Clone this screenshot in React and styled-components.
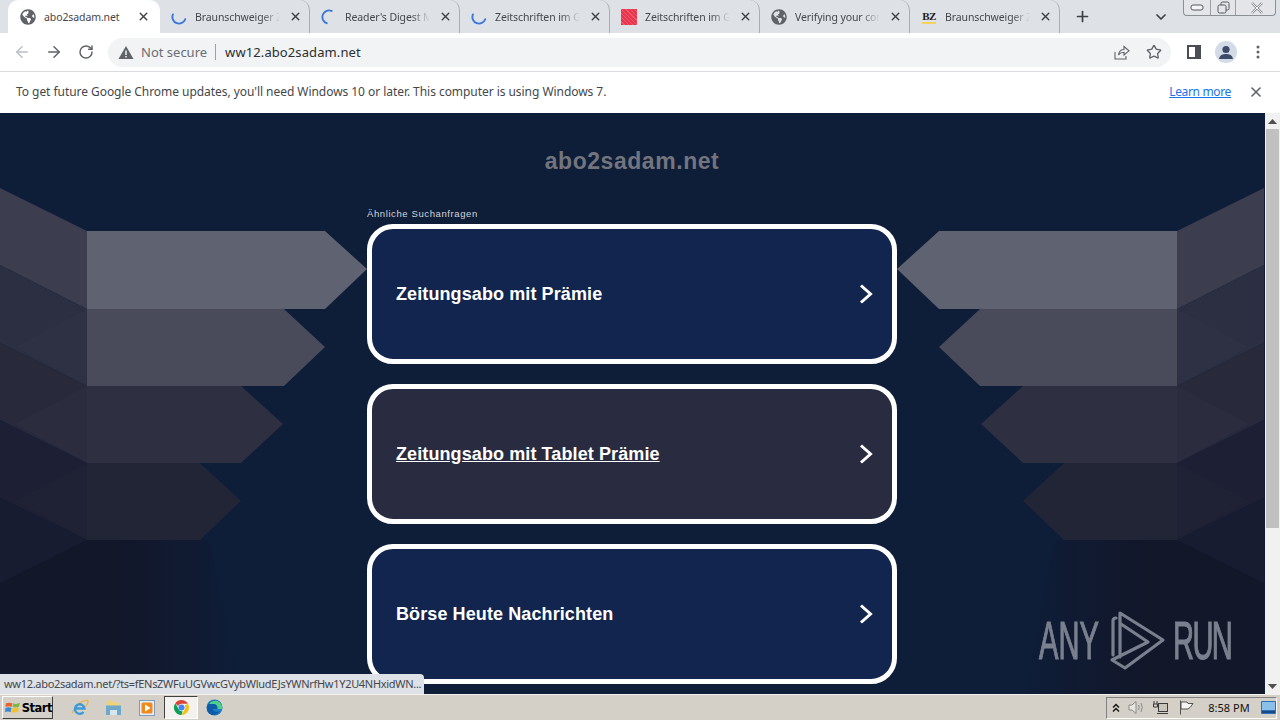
import React from "react";
import styled, { createGlobalStyle } from "styled-components";
import { ArrowLeft, ArrowRight, RotateCw, X, Plus, ChevronDown, Star } from "lucide-react";
import { FaGlobeAmericas } from "react-icons/fa";

const UI_FONT = `"Noto Sans", "Liberation Sans", sans-serif`;

const GlobalStyle = createGlobalStyle`
  html, body {
    margin: 0;
    padding: 0;
    overflow: hidden;
  }
  body {
    font-family: ${UI_FONT};
  }
`;

const Screen = styled.div`
  position: relative;
  width: 1280px;
  height: 720px;
  display: flex;
  flex-direction: column;
  overflow: hidden;
  background: #fff;
`;

/* tab strip */
const TabStrip = styled.div`
  height: 33px;
  flex: none;
  display: flex;
  align-items: stretch;
  padding-left: 8px;
  background: #dee1e6;
`;

const Tab = styled.div`
  position: relative;
  box-sizing: border-box;
  width: ${(p) => (p.$active ? "152px" : "150px")};
  flex: none;
  display: flex;
  align-items: center;
  padding-left: ${(p) => (p.$active ? "12px" : "11px")};
  padding-right: ${(p) => (p.$active ? "10px" : "7px")};
  gap: 8px;
  background: ${(p) => (p.$active ? "#fff" : "transparent")};
  border-radius: 10px 10px 0 0;
  border-right: ${(p) => (p.$sep ? "1px solid #a9acb1" : "0")};
  background-clip: padding-box;
`;

const TabIcon = styled.span`
  width: 16px;
  height: 16px;
  flex: none;
  display: flex;
  align-items: center;
  justify-content: center;
  color: #5f6368;
`;

const TabTitle = styled.span`
  flex: 1;
  min-width: 0;
  font-size: 10.5px;
  letter-spacing: -0.1px;
  line-height: 16px;
  white-space: nowrap;
  overflow: hidden;
  color: #44474b;
  ${(p) =>
    p.$fade
      ? "mask-image: linear-gradient(to right, #000 78%, transparent 100%);"
      : ""}
`;

const TabClose = styled.span`
  width: 14px;
  height: 14px;
  flex: none;
  display: flex;
  align-items: center;
  justify-content: center;
  color: #3c4043;
`;

const RedFavicon = styled.span`
  width: 16px;
  height: 16px;
  background: repeating-linear-gradient(45deg, #e8374d 0 2px, #f0596b 2px 3px);
`;

const BzFavicon = styled.span`
  font-family: "Liberation Serif", serif;
  font-weight: 700;
  font-size: 11px;
  letter-spacing: -0.6px;
  line-height: 12px;
  color: #1d1d1d;
  border-bottom: 2px solid #f3d35c;
`;

const StripButton = styled.span`
  flex: none;
  width: ${(p) => p.$w}px;
  margin-left: ${(p) => p.$ml || 0}px;
  display: flex;
  align-items: center;
  justify-content: center;
  color: #3c4043;
`;

const WindowControls = styled.div`
  position: absolute;
  top: 0;
  left: 1183px;
  width: 93px;
  height: 16px;
  box-sizing: border-box;
  display: flex;
  border: 1px solid #8b8f96;
  border-top: 0;
  border-radius: 0 0 4px 4px;
  background: #e3e5e9;
`;

const WindowButton = styled.span`
  width: ${(p) => p.$w}px;
  flex: none;
  display: flex;
  align-items: center;
  justify-content: center;
  border-right: ${(p) => (p.$sep ? "1px solid #9b9fa5" : "0")};
`;

/* address row */
const Toolbar = styled.div`
  height: 38px;
  flex: none;
  box-sizing: border-box;
  display: flex;
  align-items: center;
  padding-left: 6px;
  background: #fff;
`;

const NavButton = styled.span`
  width: 32px;
  height: 29px;
  flex: none;
  display: flex;
  align-items: center;
  justify-content: center;
  color: ${(p) => (p.$off ? "#bcbfc4" : "#5f6368")};
`;

const Omnibox = styled.div`
  width: 1063px;
  height: 29px;
  margin: 0 7px 0 6px;
  flex: none;
  display: flex;
  align-items: center;
  padding: 0 1px 0 10px;
  box-sizing: border-box;
  border-radius: 15px;
  background: #f1f3f4;
`;

const SecurityText = styled.span`
  margin-left: 7px;
  font-size: 13px;
  color: #6a6e73;
  white-space: nowrap;
`;

const Divider = styled.span`
  width: 1px;
  height: 16px;
  margin: 0 9px 0 8px;
  background: #9aa0a6;
`;

const UrlText = styled.span`
  flex: 1;
  font-size: 13px;
  letter-spacing: 0.1px;
  color: #2c2e31;
  white-space: nowrap;
`;

const Avatar = styled.span`
  width: 22px;
  height: 22px;
  border-radius: 50%;
  overflow: hidden;
  display: flex;
  background: #d3dbe8;
`;

const Rule = styled.div`
  height: 1px;
  flex: none;
  background: #dadce0;
`;

/* update notice */
const InfoBar = styled.div`
  height: 41px;
  flex: none;
  box-sizing: border-box;
  display: flex;
  align-items: center;
  padding: 0 16px 2px;
  background: #fff;
  font-size: 12px;
  letter-spacing: -0.05px;
  color: #44474b;
`;

const InfoText = styled.span`
  flex: 1;
  white-space: nowrap;
`;

const LearnMore = styled.a`
  color: #1a73e8;
  text-decoration: underline;
  letter-spacing: -0.35px;
  margin-right: 17px;
`;

/* parked page */
const Viewport = styled.div`
  flex: 1;
  min-height: 0;
  display: flex;
`;

const Page = styled.div`
  position: relative;
  flex: 1;
  min-width: 0;
  overflow: hidden;
  background: #0e1d38;
  display: flex;
  flex-direction: column;
  align-items: center;
`;

const Backdrop = styled.svg`
  position: absolute;
  inset: 0;
  width: 1265px;
  height: 581px;
`;

const PageContent = styled.div`
  position: relative;
  width: 530px;
  margin-right: 1px;
  padding-top: 33px;
  display: flex;
  flex-direction: column;
`;

const SiteName = styled.h1`
  margin: 0 0 31px;
  height: 30px;
  font-family: "Liberation Sans", Arial, sans-serif;
  font-size: 23px;
  font-weight: 700;
  line-height: 30px;
  letter-spacing: 0.55px;
  text-align: center;
  color: #72757e;
`;

const RelatedLabel = styled.div`
  height: 12px;
  margin-top: 1px;
  margin-bottom: 4px;
  font-family: "Liberation Sans", Arial, sans-serif;
  font-size: 9.5px;
  line-height: 12px;
  letter-spacing: 0.6px;
  color: #d3d6da;
`;

const CardList = styled.div`
  display: flex;
  flex-direction: column;
  gap: 20px;
`;

const Card = styled.a`
  box-sizing: border-box;
  height: 140px;
  display: flex;
  align-items: center;
  justify-content: space-between;
  padding: 0 19px 0 24px;
  border: 5px solid #fff;
  border-radius: 26px;
  background: ${(p) => (p.$hover ? "#292b40" : "#11254e")};
  font-family: "Liberation Sans", Arial, sans-serif;
  font-size: 18px;
  font-weight: 700;
  letter-spacing: 0.1px;
  color: #fff;
  text-decoration: ${(p) => (p.$hover ? "underline" : "none")};
`;

const Watermark = styled.div`
  position: absolute;
  left: 1039px;
  top: 498px;
  display: flex;
  align-items: center;
  gap: 7px;
  height: 60px;
  color: #7b808e;
`;

const WatermarkWord = styled.span`
  display: block;
  width: ${(p) => p.$w}px;
  font-family: "Liberation Sans", Arial, sans-serif;
  font-size: 53px;
  line-height: 60px;
  letter-spacing: ${(p) => p.$tight || 0}px;
  -webkit-text-stroke: 1.2px #7b808e;
  transform: scaleX(0.55);
  transform-origin: left center;
  white-space: nowrap;
`;

const Scrollbar = styled.div`
  width: 15px;
  flex: none;
  display: flex;
  flex-direction: column;
  align-items: center;
  background: #f1f1f1;
`;

const ScrollArrow = styled.span`
  height: 16px;
  flex: none;
  display: flex;
  align-items: center;
  justify-content: center;
`;

const ScrollThumb = styled.div`
  width: 13px;
  height: 399px;
  flex: none;
  background: #c1c1c1;
`;

const ScrollSpace = styled.div`
  flex: 1;
`;

const StatusBubble = styled.div`
  position: absolute;
  left: 0;
  top: 674px;
  width: 424px;
  height: 20px;
  box-sizing: border-box;
  padding-left: 4px;
  border-radius: 0 4px 0 0;
  background: #dee1e6;
  font-size: 11px;
  letter-spacing: -0.3px;
  line-height: 19px;
  color: #44474b;
  white-space: nowrap;
  overflow: hidden;
`;

/* windows taskbar */
const Taskbar = styled.div`
  height: 26px;
  flex: none;
  box-sizing: border-box;
  display: flex;
  align-items: center;
  border-top: 1px solid #f4f2ec;
  background: #d4d0c8;
`;

const StartButton = styled.div`
  box-sizing: border-box;
  width: 51px;
  height: 23px;
  margin-left: 2px;
  display: flex;
  align-items: center;
  gap: 1px;
  padding-left: 2px;
  border: 1px solid;
  border-color: #fff #404040 #404040 #fff;
  font-family: "DejaVu Sans", sans-serif;
  font-size: 11.5px;
  font-weight: 700;
  letter-spacing: -0.5px;
  color: #000;
`;

const QuickLaunch = styled.div`
  margin-left: 10px;
  display: flex;
`;

const LaunchItem = styled.span`
  box-sizing: border-box;
  width: 33.75px;
  height: 23px;
  display: flex;
  align-items: center;
  justify-content: center;
  ${(p) =>
    p.$active
      ? "background: #f4f2ee; border: 1px solid; border-color: #404040 #fff #fff #404040;"
      : ""}
`;

const Tray = styled.div`
  box-sizing: border-box;
  width: 171px;
  height: 22px;
  margin-left: auto;
  margin-right: 3px;
  display: flex;
  align-items: center;
  border: 1px solid;
  border-color: #808080 #fff #fff #808080;
`;

const TraySlot = styled.span`
  width: ${(p) => p.$w}px;
  flex: none;
  display: flex;
  align-items: center;
  justify-content: center;
`;

const Clock = styled.span`
  width: 62px;
  flex: none;
  text-align: center;
  font-size: 11px;
  color: #111;
  white-space: nowrap;
`;

const Spinner = ({ angle }) => (
  <svg width="16" height="16" viewBox="0 0 16 16">
    <circle
      cx="8"
      cy="8"
      r="6.6"
      fill="none"
      stroke="#3a77d8"
      strokeWidth="1.9"
      strokeDasharray="21 60"
      strokeLinecap="round"
      transform={`rotate(${angle} 8 8)`}
    />
  </svg>
);

const TABS = [
  { title: "abo2sadam.net", icon: <FaGlobeAmericas size={16} />, active: true },
  { title: "Braunschweiger Zeitung", icon: <Spinner angle={20} />, sep: true },
  { title: "Reader's Digest Magazin", icon: <Spinner angle={110} />, sep: true },
  { title: "Zeitschriften im Gratis", icon: <Spinner angle={20} />, sep: true },
  { title: "Zeitschriften im Gratis", icon: <RedFavicon />, sep: true },
  { title: "Verifying your connection", icon: <FaGlobeAmericas size={16} />, sep: true },
  { title: "Braunschweiger Zeitung", icon: <BzFavicon>BZ</BzFavicon>, sep: true },
];

const CARDS = [
  { label: "Zeitungsabo mit Prämie" },
  { label: "Zeitungsabo mit Tablet Prämie", hover: true },
  { label: "Börse Heute Nachrichten" },
];

// the stacked arrows behind the cards, mirrored for the right hand side
const SHAPES = [
  ["0,188 87,231 87,309 0,265", "#3c3e50"],
  ["0,265 87,309 87,386 0,343", "#2c2e41"],
  ["0,343 87,386 87,463 0,420", "#282a3c"],
  ["0,420 87,463 87,540 0,498", "#1d2034"],
  ["0,498 87,540 0,583", "#171c31"],
  ["15,347 87,309 87,386", "#2e3043"],
  ["15,424 87,386 87,463", "#2b2d3e"],
  ["15,501 87,463 87,540", "#1f2234"],
  ["87,231 325,231 367,269 325,309 87,309", "#5f6270"],
  ["87,309 284,309 325,347 284,386 87,386", "#494b5b"],
  ["87,386 241,386 283,424 241,463 87,463", "#2e3041"],
  ["87,463 200,463 241,501 200,540 87,540", "#212536"],
];

const BackdropHalf = ({ mirrored }) => (
  <g transform={mirrored ? "translate(1264 0) scale(-1 1)" : undefined}>
    <polygon points="0,583 87,540 210,540 240,694 0,694" fill="url(#fadeOut)" />
    {SHAPES.map(([points, fill]) => (
      <polygon key={points} points={points} fill={fill} />
    ))}
  </g>
);

const CardChevron = () => (
  <svg width="14" height="20" viewBox="0 0 14 20">
    <path d="M2 1.5 L11.5 10 L2 18.5" fill="none" stroke="#fff" strokeWidth="3" />
  </svg>
);

const App = () => {
  return (
    <Screen>
      <GlobalStyle />
      <TabStrip>
        {TABS.map((tab, index) => (
          <Tab key={index} $active={tab.active} $sep={tab.sep}>
            <TabIcon>{tab.icon}</TabIcon>
            <TabTitle $fade={!tab.active}>{tab.title}</TabTitle>
            <TabClose>
              <X size={13} strokeWidth={2.6} />
            </TabClose>
          </Tab>
        ))}
        <StripButton $w={24} $ml={10}>
          <Plus size={17} strokeWidth={2.4} />
        </StripButton>
        <StripButton $w={20} $ml={57}>
          <ChevronDown size={16} strokeWidth={2.6} />
        </StripButton>
      </TabStrip>
      <WindowControls>
        <WindowButton $w={26} $sep>
          <svg width="14" height="7" viewBox="0 0 14 7">
            <rect x="1" y="1" width="12" height="5" rx="2" fill="#f5f6f7" stroke="#55585e" />
          </svg>
        </WindowButton>
        <WindowButton $w={24} $sep>
          <svg width="13" height="13" viewBox="0 0 13 13">
            <rect x="4" y="1" width="8" height="8" rx="1.5" fill="none" stroke="#55585e" />
            <rect x="1" y="4" width="8" height="8" rx="1.5" fill="#e3e5e9" stroke="#55585e" />
          </svg>
        </WindowButton>
        <WindowButton $w={41}>
          <svg width="14" height="12" viewBox="0 0 14 12">
            <path d="M2 1 L12 11 M12 1 L2 11" stroke="#8a8d93" strokeWidth="2.4" />
            <path d="M2 1 L12 11 M12 1 L2 11" stroke="#f2f3f4" strokeWidth="1" />
          </svg>
        </WindowButton>
      </WindowControls>

      <Toolbar>
        <NavButton $off>
          <ArrowLeft size={18} strokeWidth={2} />
        </NavButton>
        <NavButton>
          <ArrowRight size={18} strokeWidth={2} />
        </NavButton>
        <NavButton>
          <RotateCw size={16} strokeWidth={2.2} />
        </NavButton>
        <Omnibox>
          <svg width="16" height="14" viewBox="0 0 16 14">
            <path d="M8 1 L15.5 14 H0.5 Z" fill="#5f6368" />
            <path d="M8 5.5 V10 M8 11 V12.6" stroke="#f1f3f4" strokeWidth="1.5" />
          </svg>
          <SecurityText>Not secure</SecurityText>
          <Divider />
          <UrlText>ww12.abo2sadam.net</UrlText>
          <NavButton>
            <svg width="16" height="16" viewBox="0 0 16 16" fill="none" stroke="#5f6368" strokeWidth="1.1">
              <path d="M1 8 V15 H12 V12" />
              <path d="M4.5 11 C5 7.5 7.5 5.5 10 5.5 V2.5 L15 6.8 L10 11 V8.3 C8 8.3 6 9 4.5 11 Z" />
            </svg>
          </NavButton>
          <NavButton>
            <Star size={16} strokeWidth={2} />
          </NavButton>
        </Omnibox>
        <NavButton>
          <svg width="14" height="14" viewBox="0 0 14 14">
            <rect x="1" y="1" width="12" height="12" fill="#fff" stroke="#4a4d52" strokeWidth="2" />
            <rect x="8" y="1" width="5" height="12" fill="#4a4d52" />
          </svg>
        </NavButton>
        <NavButton>
          <Avatar>
            <svg width="22" height="22" viewBox="0 0 22 22">
              <circle cx="11" cy="8.5" r="3.6" fill="#3d4a68" />
              <path d="M4 18 C5 13.5 8 13 11 13 C14 13 17 13.5 18 18 Z" fill="#3d4a68" />
            </svg>
          </Avatar>
        </NavButton>
        <NavButton>
          <svg width="4" height="14" viewBox="0 0 4 14" fill="#5f6368">
            <circle cx="2" cy="2" r="1.5" />
            <circle cx="2" cy="7" r="1.5" />
            <circle cx="2" cy="12" r="1.5" />
          </svg>
        </NavButton>
      </Toolbar>
      <Rule />

      <InfoBar>
        <InfoText>
          To get future Google Chrome updates, you'll need Windows 10 or later. This computer is using Windows 7.
        </InfoText>
        <LearnMore>Learn more</LearnMore>
        <X size={16} strokeWidth={2.4} color="#5f6368" />
      </InfoBar>

      <Viewport>
        <Page>
          <Backdrop viewBox="0 113 1265 581">
            <defs>
              <linearGradient id="fadeOut" x1="0" y1="0" x2="1" y2="0">
                <stop offset="0" stopColor="#12172a" />
                <stop offset="0.5" stopColor="#12172a" />
                <stop offset="1" stopColor="#12172a" stopOpacity="0" />
              </linearGradient>
            </defs>
            <BackdropHalf />
            <BackdropHalf mirrored />
          </Backdrop>
          <PageContent>
            <SiteName>abo2sadam.net</SiteName>
            <RelatedLabel>Ähnliche Suchanfragen</RelatedLabel>
            <CardList>
              {CARDS.map((card) => (
                <Card key={card.label} $hover={card.hover}>
                  {card.label}
                  <CardChevron />
                </Card>
              ))}
            </CardList>
          </PageContent>
          <Watermark>
            <WatermarkWord $w={62}>ANY</WatermarkWord>
            <svg width="58" height="64" viewBox="1108 609 58 64" fill="none" stroke="#7b808e" strokeWidth="3.2" strokeLinejoin="round" strokeLinecap="round">
              <path d="M1116 618 Q1113 618 1113 621 V655" />
              <path d="M1120 657 V613 L1163 640 L1125 668 L1112 660 L1148 642 L1121 624" />
            </svg>
            <WatermarkWord $w={56} $tight={-3}>RUN</WatermarkWord>
          </Watermark>
        </Page>
        <Scrollbar>
          <ScrollArrow>
            <svg width="9" height="5" viewBox="0 0 9 5">
              <path d="M4.5 0 L9 5 H0 Z" fill="#505050" />
            </svg>
          </ScrollArrow>
          <ScrollThumb />
          <ScrollSpace />
          <ScrollArrow>
            <svg width="9" height="5" viewBox="0 0 9 5">
              <path d="M0 0 H9 L4.5 5 Z" fill="#505050" />
            </svg>
          </ScrollArrow>
        </Scrollbar>
      </Viewport>

      <StatusBubble>ww12.abo2sadam.net/?ts=fENsZWFuUGVwcGVybWludEJsYWNrfHw1Y2U4NHxidWN...</StatusBubble>

      <Taskbar>
        <StartButton>
          <svg width="17" height="15" viewBox="0 0 17 15">
            <path d="M1 3 Q4 1.5 8 3 L7 7 Q4 5.5 0.5 7 Z" fill="#e8622c" />
            <path d="M9 3 Q12 4.5 16 2.5 L15 6.5 Q12 8 8 7 Z" fill="#7cb844" />
            <path d="M0.5 8 Q4 6.5 7 8 L6 12.5 Q3 11 0 12.5 Z" fill="#3b87d8" />
            <path d="M8 8 Q12 9 15 7.5 L14 12 Q10 13.5 7 12.5 Z" fill="#f4c02e" />
          </svg>
          Start
        </StartButton>
        <QuickLaunch>
          <LaunchItem>
            <svg width="18" height="18" viewBox="0 0 18 18">
              <path d="M1.5 14 C5 5 12 0.5 16.5 1.5 C18 3.5 15.5 6.5 14.5 7.5" fill="none" stroke="#e9b64a" strokeWidth="1.4" />
              <path d="M4.5 9.5 H13.5 A4.8 4.8 0 1 0 12.5 13" fill="none" stroke="#3c9ad8" strokeWidth="2.4" />
            </svg>
          </LaunchItem>
          <LaunchItem>
            <svg width="17" height="17" viewBox="0 0 17 17">
              <path d="M2 1.5 H7 L9 3.5 H15 V8 H2 Z" fill="#f0d277" />
              <path d="M1 6.5 H16 V16 H12 V11 H5 V16 H1 Z" fill="#6fa8c8" />
              <rect x="5" y="11" width="7" height="5" fill="#d6e6ec" />
            </svg>
          </LaunchItem>
          <LaunchItem>
            <svg width="16" height="16" viewBox="0 0 16 16">
              <rect x="0.5" y="0.5" width="15" height="15" fill="#e8eef5" stroke="#7d9cc0" />
              <rect x="2.5" y="2.5" width="11" height="11" rx="1.5" fill="#ef8a1c" />
              <path d="M6 4.5 L11.5 8 L6 11.5 Z" fill="#fff" />
            </svg>
          </LaunchItem>
          <LaunchItem $active>
            <svg width="17" height="17" viewBox="0 0 17 17">
              <path d="M8.5 1 A7.5 7.5 0 0 1 15 4.8 H8.5 A3.8 3.8 0 0 0 5 7 L2.3 4.2 A7.5 7.5 0 0 1 8.5 1 Z" fill="#db4437" />
              <path d="M15 4.8 A7.5 7.5 0 0 1 8.5 16 L11.8 10.4 A3.8 3.8 0 0 0 11.8 6.6 Z" fill="#f4c20d" />
              <path d="M8.5 16 A7.5 7.5 0 0 1 2.3 4.2 L5.5 10 A3.8 3.8 0 0 0 9.6 12.2 Z" fill="#0f9d58" />
              <circle cx="8.5" cy="8.5" r="3" fill="#4285f4" />
            </svg>
          </LaunchItem>
          <LaunchItem>
            <svg width="17" height="17" viewBox="0 0 17 17">
              <circle cx="8.5" cy="8.5" r="8" fill="#1f7fc4" />
              <path d="M1 8 C2 2 9 0 13 2.5 C16 4.5 16.5 8 16 10 H6.5 C7 12.5 11 13.5 14 12 C12 15.5 8 17 5 15.5 C1.5 14 0.5 11 1 8 Z" fill="#0e5ba8" />
              <path d="M3 5 C5 1.5 11 0.5 14 3.5 C16 5.5 16.5 8 16 10 H11.5 C12 7 10 5 7.5 5 C6 5 4 5 3 5 Z" fill="#4fd08a" />
            </svg>
          </LaunchItem>
        </QuickLaunch>
        <Tray>
          <TraySlot $w={17}>
            <svg width="8" height="10" viewBox="0 0 8 10" fill="none" stroke="#111" strokeWidth="1.4">
              <path d="M1 4.5 L4 1.5 L7 4.5 M1 8.5 L4 5.5 L7 8.5" />
            </svg>
          </TraySlot>
          <TraySlot $w={24}>
            <svg width="17" height="15" viewBox="0 0 17 15" fill="none" stroke="#8c8a84">
              <path d="M1 5 H4 L8 1.5 V13.5 L4 10 H1 Z" fill="#e8e6e0" />
              <path d="M10.5 5 Q12 7.5 10.5 10 M13 3 Q15.5 7.5 13 12" />
            </svg>
          </TraySlot>
          <TraySlot $w={25}>
            <svg width="17" height="15" viewBox="0 0 17 15" fill="none" stroke="#3a3a3a">
              <path d="M2 1 V4 M5 1 V4 M1.5 4 H5.5 V7 H1.5 Z" />
              <rect x="6.5" y="3.5" width="9" height="8" fill="#c9c5bb" />
              <path d="M5 13.5 H16" />
            </svg>
          </TraySlot>
          <TraySlot $w={25}>
            <svg width="16" height="15" viewBox="0 0 16 15" fill="none" stroke="#55534e">
              <path d="M2.5 0.5 V14.5" />
              <path d="M3 2 H9 L10 3.5 H15 L12.5 7 L10 9 H3 Z" fill="#f5f4f0" />
            </svg>
          </TraySlot>
          <Clock>8:58 PM</Clock>
          <TraySlot $w={16}>
            <svg width="15" height="13" viewBox="0 0 15 13">
              <rect x="0" y="0" width="15" height="13" rx="1" fill="#2d6fb7" />
              <rect x="1" y="1" width="13" height="8" fill="#8cc0ea" />
              <rect x="1" y="10" width="13" height="2" fill="#184b86" />
            </svg>
          </TraySlot>
        </Tray>
      </Taskbar>
    </Screen>
  );
};

export default App;
